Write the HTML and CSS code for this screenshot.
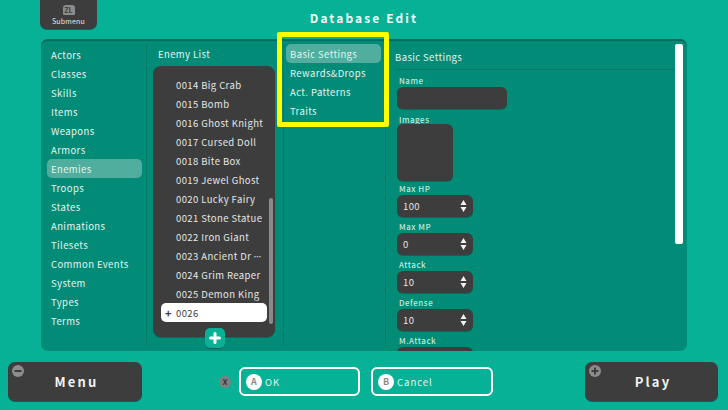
FILE: index.html
```html
<!DOCTYPE html>
<html lang="en">
<head>
<meta charset="utf-8">
<title>Database Edit</title>
<link rel="stylesheet" href="styles.css">
</head>
<body>
<div class="app">
  <header class="top">
    <div class="submenu">
      <span class="zl">ZL</span>
      <span class="submenu-label">Submenu</span>
    </div>
    <h1 class="title">Database Edit</h1>
  </header>

  <main class="panel">
    <nav class="col col-side">
      <div class="row">Actors</div>
      <div class="row">Classes</div>
      <div class="row">Skills</div>
      <div class="row">Items</div>
      <div class="row">Weapons</div>
      <div class="row">Armors</div>
      <div class="row active">Enemies</div>
      <div class="row">Troops</div>
      <div class="row">States</div>
      <div class="row">Animations</div>
      <div class="row">Tilesets</div>
      <div class="row">Common Events</div>
      <div class="row">System</div>
      <div class="row">Types</div>
      <div class="row">Terms</div>
    </nav>

    <section class="col col-list">
      <div class="list-title">Enemy List</div>
      <div class="list-box">
        <div class="item">0014 Big Crab</div>
        <div class="item">0015 Bomb</div>
        <div class="item">0016 Ghost Knight</div>
        <div class="item">0017 Cursed Doll</div>
        <div class="item">0018 Bite Box</div>
        <div class="item">0019 Jewel Ghost</div>
        <div class="item">0020 Lucky Fairy</div>
        <div class="item">0021 Stone Statue</div>
        <div class="item">0022 Iron Giant</div>
        <div class="item">0023 Ancient Dr<span class="dots">···</span></div>
        <div class="item">0024 Grim Reaper</div>
        <div class="item">0025 Demon King</div>
        <div class="item item-new"><span class="item-plus">+</span>0026</div>
        <div class="list-scroll"></div>
        <div class="add-btn">
          <svg width="12" height="12" viewBox="0 0 12 12"><path d="M6 1.5v9M1.5 6h9" stroke="#fff" stroke-width="3" stroke-linecap="round"/></svg>
        </div>
      </div>
    </section>

    <nav class="col col-tabs">
      <div class="row active">Basic Settings</div>
      <div class="row">Rewards&amp;Drops</div>
      <div class="row">Act. Patterns</div>
      <div class="row">Traits</div>
    </nav>

    <section class="col-form">
      <div class="form-title">Basic Settings</div>
      <div class="form-body">
        <label class="lab lab-name">Name</label>
        <div class="box box-name"></div>
        <label class="lab lab-images">Images</label>
        <div class="box box-image"></div>
        <label class="lab lab-hp">Max HP</label>
        <div class="box spin"><span>100</span><svg class="arrows" width="7" height="12" viewBox="0 0 7 12"><path d="M3.5 0L6.5 5H0.5ZM0.5 7H6.5L3.5 12Z" fill="#f2f2f2"/></svg></div>
        <label class="lab">Max MP</label>
        <div class="box spin"><span>0</span><svg class="arrows" width="7" height="12" viewBox="0 0 7 12"><path d="M3.5 0L6.5 5H0.5ZM0.5 7H6.5L3.5 12Z" fill="#f2f2f2"/></svg></div>
        <label class="lab">Attack</label>
        <div class="box spin"><span>10</span><svg class="arrows" width="7" height="12" viewBox="0 0 7 12"><path d="M3.5 0L6.5 5H0.5ZM0.5 7H6.5L3.5 12Z" fill="#f2f2f2"/></svg></div>
        <label class="lab">Defense</label>
        <div class="box spin"><span>10</span><svg class="arrows" width="7" height="12" viewBox="0 0 7 12"><path d="M3.5 0L6.5 5H0.5ZM0.5 7H6.5L3.5 12Z" fill="#f2f2f2"/></svg></div>
        <label class="lab">M.Attack</label>
        <div class="box spin"></div>
      </div>
      <div class="form-scroll"></div>
    </section>
  </main>

  <div class="highlight"></div>

  <footer class="bottom">
    <div class="big-btn">
      <span class="corner">
        <svg width="12" height="12" viewBox="0 0 12 12"><circle cx="6" cy="6" r="6" fill="#8c8c8c"/><path d="M2.5 6h7" stroke="#3c3c3c" stroke-width="2"/></svg>
      </span>
      <span class="big-label">Menu</span>
    </div>
    <div class="center-btns">
      <span class="x-key">X</span>
      <div class="outline-btn"><span class="key">A</span>OK</div>
      <div class="outline-btn"><span class="key">B</span>Cancel</div>
    </div>
    <div class="big-btn big-btn-play">
      <span class="corner">
        <svg width="12" height="12" viewBox="0 0 12 12"><circle cx="6" cy="6" r="6" fill="#8c8c8c"/><path d="M2.5 6h7M6 2.5v7" stroke="#3c3c3c" stroke-width="2"/></svg>
      </span>
      <span class="big-label">Play</span>
    </div>
  </footer>
</div>
</body>
</html>
```

FILE: styles.css
```css
* { box-sizing: border-box; }
html, body { margin: 0; padding: 0; }
body {
  width: 728px;
  height: 410px;
  overflow: hidden;
  background: #06b196;
  font-family: "Noto Sans CJK JP", "Noto Sans", sans-serif;
  color: #e4f4ef;
  font-size: 9.5px;
  letter-spacing: 0.4px;
}
.app {
  width: 728px;
  height: 410px;
  display: flex;
  flex-direction: column;
  position: relative;
}
.top {
  height: 39px;
  flex: none;
  padding-left: 40px;
  position: relative;
}
.submenu {
  width: 57px;
  height: 29px;
  background: #3d3d3d;
  border-radius: 0 0 7px 7px;
  box-shadow: 0 1px 0 #0a6a5c;
  display: flex;
  flex-direction: column;
  align-items: center;
}
.zl {
  margin-top: 5px;
  width: 12px;
  height: 10px;
  border-radius: 3px 3px 1px 1px;
  background: #8c8c8c;
  color: #3d3d3d;
  font-size: 7px;
  font-weight: 700;
  line-height: 10px;
  text-align: center;
  letter-spacing: 0;
}
.submenu-label {
  font-size: 7px;
  line-height: 10px;
  margin-top: 1px;
  letter-spacing: 0.2px;
  color: #e8e8e8;
}
.title {
  position: absolute;
  left: 0;
  right: 0;
  top: 9px;
  margin: 0;
  font-size: 12px;
  line-height: 18px;
  font-weight: 700;
  letter-spacing: 2.1px;
  text-align: center;
  color: #f2fbf8;
}
.panel {
  margin-left: 41px;
  width: 646px;
  height: 312px;
  flex: none;
  background: #028c78;
  border-radius: 7px;
  box-shadow: inset 0 2px 0 #056a5c;
  display: flex;
  padding: 5px 0 0;
  overflow: hidden;
}
.col {
  flex: none;
  height: 301px;
  border-right: 1px solid #067a68;
}
.col-side {
  width: 106px;
  padding: 1px 4px 0 6px;
}
.row {
  height: 19px;
  line-height: 19px;
  padding: 1px 0 0 4px;
  border-radius: 5px;
  white-space: nowrap;
}
.row.active { background: #4fae9e; }
.col-list {
  width: 137px;
  padding: 1px 0 0 6px;
}
.list-title {
  height: 21px;
  line-height: 18px;
  padding-left: 5px;
}
.list-box {
  width: 122px;
  height: 271px;
  background: #3d3d3d;
  border-radius: 8px;
  box-shadow: 0 1px 0 #056a5c;
  padding: 9px 0 0 8px;
  position: relative;
  color: #e6e6e6;
}
.item {
  width: 106px;
  height: 19px;
  line-height: 19px;
  padding: 1px 0 0 15px;
  white-space: nowrap;
}
.dots { letter-spacing: -2.8px; margin-left: 1px; }
.item-new {
  position: relative;
  background: #fff;
  color: #3d3d3d;
  border-radius: 5px;
}
.item-plus {
  position: absolute;
  left: 4px;
  font-size: 11px;
  font-weight: 700;
}
.list-scroll {
  position: absolute;
  left: 116px;
  top: 132px;
  width: 4px;
  height: 126px;
  border-radius: 2px;
  background: #8a8a8a;
}
.add-btn {
  position: absolute;
  left: 52px;
  top: 262px;
  width: 20px;
  height: 20px;
  border-radius: 5px;
  background: #06b196;
  box-shadow: 0 1px 0 #056a5c;
  display: flex;
  align-items: center;
  justify-content: center;
}
.col-tabs {
  width: 102px;
  padding: 0 4px 0 2px;
}
.col-form {
  flex: 1;
  padding: 1px 0 0 9px;
  position: relative;
  height: 307px;
  overflow: hidden;
}
.form-title {
  width: 280px;
  height: 25px;
  line-height: 24px;
  border-bottom: 1px solid #067a68;
}
.form-body {
  padding-left: 2px;
  display: flex;
  flex-direction: column;
  align-items: flex-start;
}
.lab {
  height: 16px;
  padding: 3px 0 0 2px;
  line-height: 14px;
  font-size: 8px;
  color: #c4e6dd;
  letter-spacing: 0.5px;
  font-weight: 500;
}
.lab-name { height: 17px; padding-top: 4px; }
.box {
  background: #3d3d3d;
  border-radius: 6px;
  box-shadow: 0 1px 0 #056a5c;
  flex: none;
}
.box-name { width: 110px; height: 22px; }
.lab-images { height: 15px; padding-top: 4px; }
.box-image { width: 56px; height: 57px; }
.lab-hp { height: 14px; padding-top: 1px; }
.spin {
  width: 76px;
  height: 22px;
  display: flex;
  align-items: center;
  justify-content: space-between;
  padding: 0 6px;
  color: #e6e6e6;
}
.form-scroll {
  position: absolute;
  left: 289px;
  top: 0;
  width: 8px;
  height: 200px;
  border-radius: 2px;
  background: #fff;
}
.highlight {
  position: absolute;
  left: 277px;
  top: 32px;
  width: 112px;
  height: 95px;
  border: 5px solid #ffff00;
  border-radius: 2px;
}
.bottom {
  flex: none;
  height: 59px;
  padding: 11px 10px 9px 8px;
  display: flex;
  justify-content: space-between;
}
.big-btn {
  width: 134px;
  height: 39px;
  background: #3d3d3d;
  border-radius: 7px;
  box-shadow: 0 1px 0 #056a5c;
  position: relative;
  display: flex;
  align-items: center;
  justify-content: center;
  font-size: 13px;
  font-weight: 700;
  letter-spacing: 2.2px;
  color: #f2f2f2;
}
.big-label { margin: -1px 0 0 3px; }
.big-btn-play { width: 133px; }
.corner {
  position: absolute;
  left: 4px;
  top: 3px;
  width: 12px;
  height: 12px;
  display: flex;
}
.center-btns {
  display: flex;
  align-items: center;
  height: 29px;
  margin: 5px 15px 0 0;
  line-height: 14px;
}
.x-key {
  width: 12px;
  height: 12px;
  border-radius: 50%;
  background: #808080;
  color: #333;
  font-size: 8px;
  font-weight: 700;
  line-height: 12px;
  text-align: center;
  letter-spacing: 0;
  margin-right: 8px;
}
.outline-btn {
  width: 121px;
  height: 29px;
  border: 2px solid #fff;
  border-radius: 6px;
  display: flex;
  align-items: center;
  padding-left: 5px;
  gap: 3px;
  color: #e4f4ef;
  letter-spacing: 1px;
  margin-right: 11px;
}
.outline-btn:last-child { margin-right: 0; width: 122px; }
.key {
  width: 16px;
  height: 16px;
  border-radius: 50%;
  background: #fff;
  color: #8a8a8a;
  font-size: 9px;
  font-weight: 700;
  line-height: 16px;
  text-align: center;
  letter-spacing: 0;
}
```
